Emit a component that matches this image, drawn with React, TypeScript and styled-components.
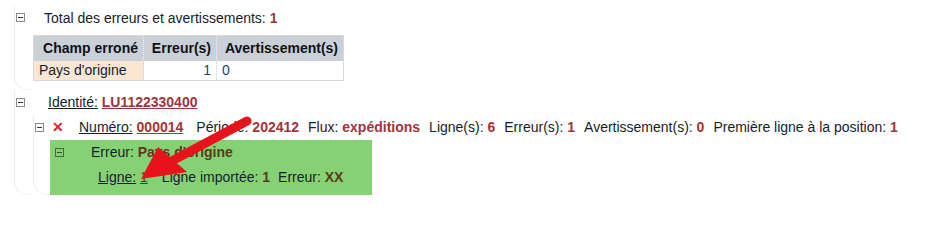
import styled, { createGlobalStyle } from "styled-components";

const Global = createGlobalStyle`
  body {
    margin: 0;
    background: #fff;
    font-family: "Liberation Sans", Arial, sans-serif;
    font-size: 14px;
    color: #161d2e;
  }
`;

export default function App() {
  return (
    <Page>
      <Global />
      <Section>
        <Head>
          <Toggle />
          <Label $indent={19}>
            Total des erreurs et avertissements: <Red>1</Red>
          </Label>
        </Head>
        <Table>
          <thead>
            <tr>
              <Th $w={110}>Champ erroné</Th>
              <Th $w={73}>Erreur(s)</Th>
              <Th $w={127}>Avertissement(s)</Th>
            </tr>
          </thead>
          <tbody>
            <tr>
              <Td $field>Pays d'origine</Td>
              <Td $num $right>1</Td>
              <Td $num>0</Td>
            </tr>
          </tbody>
        </Table>
      </Section>

      <Section $last>
        <Head>
          <Toggle />
          <Label $indent={23}>
            <Link>Identité:</Link> <RedLink>LU1122330400</RedLink>
          </Label>
        </Head>
        <SubSection>
          <Head>
            <Toggle />
            <Cross>✕</Cross>
            <Label $indent={15}>
              <Link>Numéro:</Link> <RedLink>000014</RedLink>
              <Gap $w={13} />Période: <Red>202412</Red>
              <Gap $w={9} />Flux: <Red>expéditions</Red>
              <Gap $w={9} />Ligne(s): <Red>6</Red>
              <Gap $w={9} />Erreur(s): <Red>1</Red>
              <Gap $w={9} />Avertissement(s): <Red>0</Red>
              <Gap $w={9} />Première ligne à la position: <Red>1</Red>
            </Label>
          </Head>
          <ErrorBox>
            <Head>
              <Toggle $dark />
              <Label $indent={27}>
                Erreur: <Brown>Pays d'origine</Brown>
              </Label>
            </Head>
            <Detail>
              <Link>Ligne:</Link> <BrownLink>1</BrownLink>
              <Gap $w={14} />Ligne importée: <Brown>1</Brown>
              <Gap $w={8} />Erreur: <Brown>XX</Brown>
            </Detail>
          </ErrorBox>
        </SubSection>
      </Section>

      <Arrow viewBox="0 0 941 203" width="941" height="203">
        <line x1="247" y1="121" x2="168" y2="163" stroke="#e8121a" strokeWidth="9" strokeLinecap="round" />
        <polygon points="141,179 158,147 187,172" fill="#e8121a" />
      </Arrow>
    </Page>
  );
}

const Page = styled.div`
  position: relative;
  width: 941px;
  height: 203px;
  padding: 5px 0 0 14px;
  box-sizing: border-box;
  overflow: hidden;
`;

const Bracket = `
  position: relative;
  white-space: nowrap;
  &::before {
    content: "";
    position: absolute;
    left: 0;
    top: 0;
    bottom: 0;
    width: 16px;
    border-left: 1px solid #ececec;
    border-bottom: 1px solid #f3f3f3;
    border-bottom-left-radius: 14px;
    pointer-events: none;
  }
`;

const Section = styled.div<{ $last?: boolean }>`
  ${Bracket}
  padding-left: 1px;
  padding-bottom: ${(p) => (p.$last ? 0 : 9)}px;
`;

const SubSection = styled.div`
  ${Bracket}
  margin-left: 18px;
  padding-left: 1px;
`;

const Head = styled.div`
  display: flex;
  align-items: center;
  height: 25px;
`;

const Toggle = styled.span<{ $dark?: boolean }>`
  flex: none;
  width: 7px;
  height: 7px;
  margin-left: 1px;
  border: 1px solid ${(p) => (p.$dark ? "#3f6f36" : "#8a8a8a")};
  position: relative;
  &::after {
    content: "";
    position: absolute;
    left: 1px;
    right: 1px;
    top: 3px;
    height: 1px;
    background: ${(p) => (p.$dark ? "#2e4f28" : "#333")};
  }
`;

const Label = styled.span<{ $indent: number }>`
  margin-left: ${(p) => p.$indent}px;
  white-space: nowrap;
`;

const Red = styled.b`
  color: #a0353a;
`;

const Link = styled.span`
  text-decoration: underline;
  color: #161d2e;
`;

const RedLink = styled(Red)`
  text-decoration: underline;
`;

const Brown = styled.b`
  color: #5a3a1e;
`;

const BrownLink = styled.span`
  text-decoration: underline;
  color: #5a3a1e;
`;

const Gap = styled.span<{ $w: number }>`
  display: inline-block;
  width: ${(p) => p.$w}px;
`;

const Cross = styled.span`
  color: #e0242b;
  font-weight: bold;
  font-size: 14px;
  margin-left: 8px;
`;

const Table = styled.table`
  margin: 5px 0 0 18px;
  border-collapse: collapse;
  border: 1px solid #d8d8d8;
  table-layout: fixed;
`;

const Th = styled.th<{ $w: number }>`
  width: ${(p) => p.$w}px;
  box-sizing: border-box;
  background: #c9d0d8;
  font-weight: bold;
  color: #111;
  height: 25px;
  padding: 0 5px 0 0;
  border-right: 1px dotted #eef0f3;
  text-align: right;
`;

const Td = styled.td<{ $field?: boolean; $num?: boolean; $right?: boolean }>`
  height: 19px;
  padding: 0 5px;
  background: ${(p) => (p.$field ? "#fbe6d2" : "#fff")};
  color: ${(p) => (p.$num ? "#1d3f75" : "#161d2e")};
  text-align: ${(p) => (p.$right ? "right" : "left")};
  border-right: 1px dotted #cccccc;
`;

const ErrorBox = styled.div`
  width: 322px;
  height: 55px;
  margin-left: 16px;
  background: #87d175;
  padding-left: 4px;
  box-sizing: border-box;
`;

const Detail = styled.div`
  margin-left: 44px;
  height: 24px;
  line-height: 24px;
  white-space: nowrap;
`;

const Arrow = styled.svg`
  position: absolute;
  left: 0;
  top: 0;
  pointer-events: none;
`;
